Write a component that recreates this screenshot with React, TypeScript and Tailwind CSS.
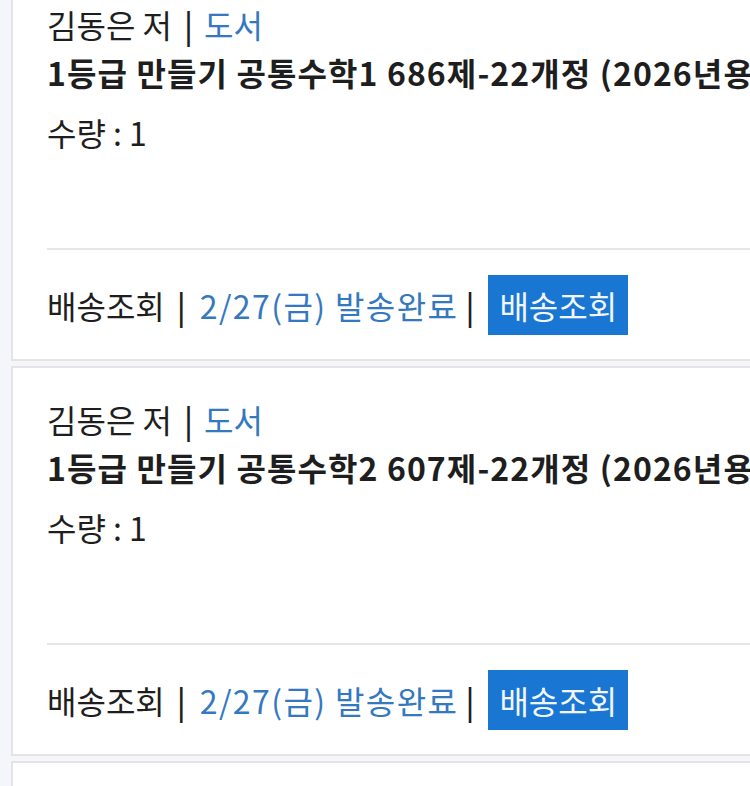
import React from "react";

const items = [
  { title: "1등급 만들기 공통수학1 686제-22개정 (2026년용)" },
  { title: "1등급 만들기 공통수학2 607제-22개정 (2026년용)" },
  { title: "1등급 만들기 대수 577제-22개정 (2026년용)" },
];

function Bar({ className }: { className: string }) {
  return <span className={"inline-block font-medium text-[#1e1e1e] " + className}>|</span>;
}

export default function App() {
  return (
    <div
      className="min-h-[786px] w-[750px] overflow-hidden bg-[#f4f6fb] pl-[11px]"
      style={{ fontFamily: '"Noto Sans CJK KR", "Noto Sans", sans-serif' }}
    >
      <div className="-mt-[29px] flex flex-col gap-[5px]">
        {items.map((it, i) => (
          <div
            key={i}
            className="h-[390px] border-y-2 border-l-2 border-[#e4e4e4] bg-white pl-[34px] text-[32px] text-[#1e1e1e]"
          >
            <div className="pt-[27px]">
              <div className="h-[48px] whitespace-nowrap leading-[48px]">
                김동은 저<Bar className="ml-[12px] mr-[11px]" />
                <span className="text-[#3479c0]">도서</span>
              </div>
              <div className="h-[48px] whitespace-nowrap font-bold leading-[48px] tracking-[1.1px]">
                {it.title}
              </div>
              <div className="mt-[12px] h-[48px] leading-[48px]">수량 : 1</div>
            </div>
            <div className="mt-[92px] h-[2px] bg-[#e6e6e6]" />
            <div className="flex h-[110px] items-center whitespace-nowrap pb-[1px] leading-[48px]">
              <span>배송조회</span>
              <Bar className="ml-[12px] mr-[14px]" />
              <span className="tracking-[1.4px] text-[#3479c0]">2/27(금) 발송완료</span>
              <Bar className="ml-[7px] mr-[14px]" />
              <span className="flex h-[60px] items-center bg-[#1a76d3] px-[11px] text-[#f2f6fb]">
                배송조회
              </span>
            </div>
          </div>
        ))}
      </div>
    </div>
  );
}
